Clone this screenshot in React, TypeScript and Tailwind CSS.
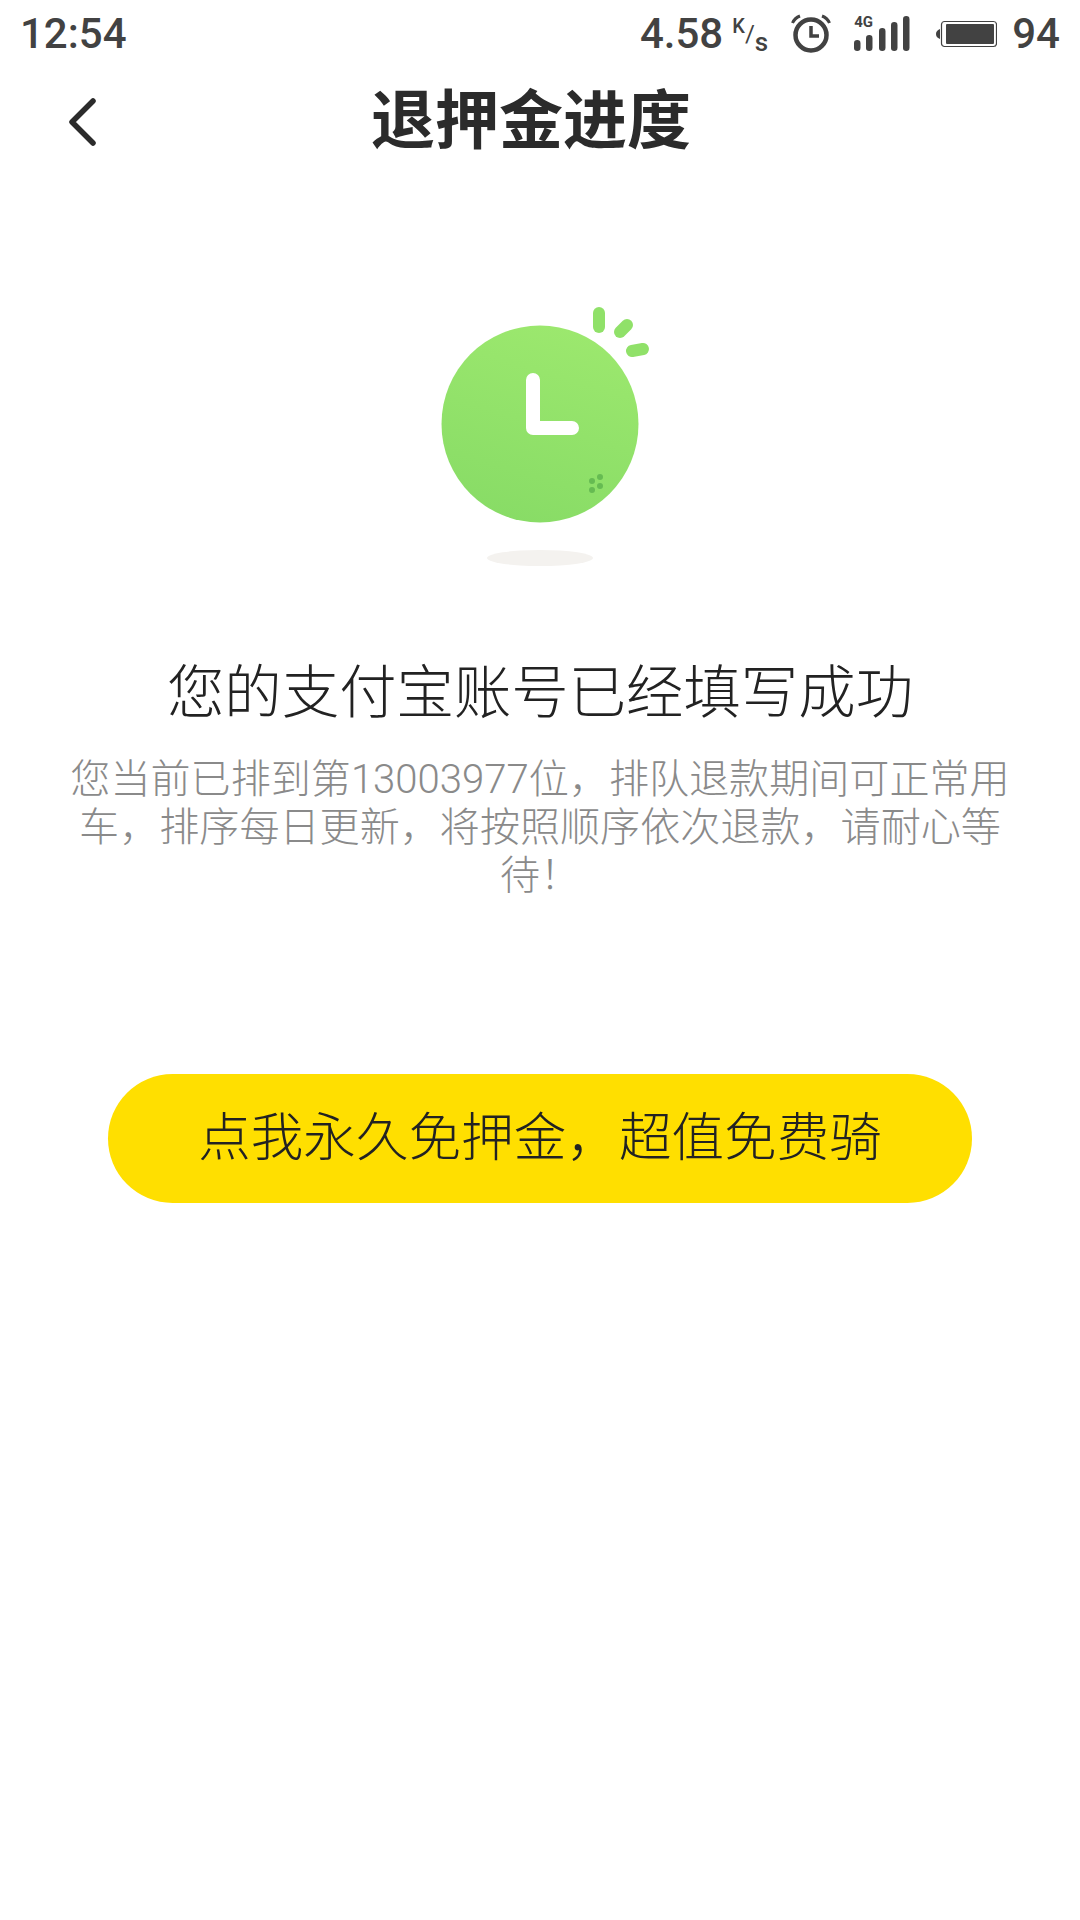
const latin = "font-['Roboto','Noto_Sans_CJK_SC',sans-serif]"

function AlarmIcon() {
  return (
    <svg width="40" height="40" viewBox="0 0 40 40" fill="none" stroke="#424242">
      <circle cx="20" cy="21" r="15.5" strokeWidth="4.5" />
      <path d="M20 12v10h8" strokeWidth="3.5" />
      <path d="M1.5 9C3 5.500 5 3.500 9 2M38.500 9C37 5.500 35 3.500 31 2" strokeWidth="3" />
    </svg>
  )
}

function SignalIcon() {
  return (
    <div className="relative h-[36px] w-[56px]">
      <span className="absolute left-0 top-0 font-['Roboto',sans-serif] text-[15px] font-bold leading-[12px] text-[#424242]">
        4G
      </span>
      <svg width="56" height="36" viewBox="0 0 56 36" fill="#424242">
        <rect x="0" y="24" width="6.500" height="11" rx="3.200" />
        <rect x="12" y="19" width="6.500" height="16" rx="3.200" />
        <rect x="25" y="12" width="6.500" height="23" rx="3.200" />
        <rect x="37" y="6" width="6.500" height="29" rx="3.200" />
        <rect x="49" y="0" width="6.500" height="35" rx="3.200" />
      </svg>
    </div>
  )
}

function BatteryIcon() {
  return (
    <svg width="62" height="28" viewBox="0 0 62 28">
      <path d="M5 9C2 10 1 12 1 14s1 4 4 5z" fill="#424242" />
      <rect x="6.500" y="1.500" width="55" height="25" rx="3" fill="none" stroke="#424242" strokeWidth="1.200" />
      <rect x="11" y="4" width="48" height="20" rx="1" fill="#424242" />
    </svg>
  )
}

function StatusBar() {
  return (
    <div className={`flex h-[66px] items-center justify-between pl-[20px] pr-[20px] pt-[1px] text-[#424242] ${latin}`}>
      <span className="text-[42px] font-medium leading-none">12:54</span>
      <div className="flex items-center">
        <span className="text-[42px] font-medium leading-none">4.58</span>
        <div className="ml-[9px] flex h-[30px] w-[36px] justify-between text-[#424242]">
          <span className="self-start text-[20px] font-medium leading-[14px]">K</span>
          <span className="self-center text-[24px] leading-none">/</span>
          <span className="self-end text-[26px] font-medium leading-[14px]">s</span>
        </div>
        <div className="ml-[23px]">
          <AlarmIcon />
        </div>
        <div className="ml-[23px]">
          <SignalIcon />
        </div>
        <div className="ml-[25px]">
          <BatteryIcon />
        </div>
        <span className="ml-[15px] text-[42px] font-medium leading-none">94</span>
      </div>
    </div>
  )
}

function Header() {
  return (
    <div className="flex h-[110px] items-center pt-[2px]">
      <svg className="ml-[68px]" width="28" height="48" viewBox="0 0 28 48" fill="none">
        <path d="M25 3 4 24l21 21" stroke="#2b2b2b" strokeWidth="5.500" strokeLinecap="round" strokeLinejoin="round" />
      </svg>
      <h1 className="ml-[275px] text-[64px] font-bold leading-none text-[#2b2b2b]">退押金进度</h1>
    </div>
  )
}

// Green clock badge with its three ticks and the soft shadow underneath
function ClockBadge() {
  return (
    <svg className="mx-auto mt-[114px] block" width="240" height="290" viewBox="0 0 240 290">
      <defs>
        <linearGradient id="clockFill" x1="0.65" y1="0" x2="0.35" y2="1">
          <stop offset="0" stopColor="#9ce86e" />
          <stop offset="1" stopColor="#88dc66" />
        </linearGradient>
      </defs>
      <circle cx="120" cy="134" r="98.500" fill="url(#clockFill)" />
      <path d="M113 90v48h39" fill="none" stroke="#fff" strokeWidth="14" strokeLinecap="round" strokeLinejoin="round" />
      <g stroke="#90e169" strokeWidth="12" strokeLinecap="round">
        <path d="M179 23v14" />
        <path d="M207 35l-7 7" />
        <path d="M212 61l11-2" />
      </g>
      <g fill="#66bb52">
        <circle cx="172" cy="191" r="3" />
        <circle cx="180" cy="187" r="3" />
        <circle cx="172" cy="200" r="3" />
        <circle cx="180" cy="196" r="3" />
      </g>
      <ellipse cx="120" cy="268" rx="53" ry="8" fill="#f4f2ef" />
    </svg>
  )
}

export default function App() {
  return (
    <div className={`h-[1920px] w-[1080px] overflow-hidden bg-white ${latin}`}>
      <StatusBar />
      <Header />
      <ClockBadge />
      <h2 className="mt-[78px] text-center text-[57.400px] font-light leading-[72px] text-[#222222]">
        您的支付宝账号已经填写成功
      </h2>
      <p className="mx-auto mt-[26px] w-[944px] text-center text-[40.100px] font-light leading-[48px] text-[#8a8a8a]">
        您当前已排到第13003977位，排队退款期间可正常用车，排序每日更新，将按照顺序依次退款，请耐心等待！
      </p>
      <button
        type="button"
        className="mx-auto mt-[174px] block h-[129px] w-[864px] rounded-full bg-[#ffdf00] text-[52.600px] font-light text-[#222222]"
      >
        点我永久免押金，超值免费骑
      </button>
    </div>
  )
}
